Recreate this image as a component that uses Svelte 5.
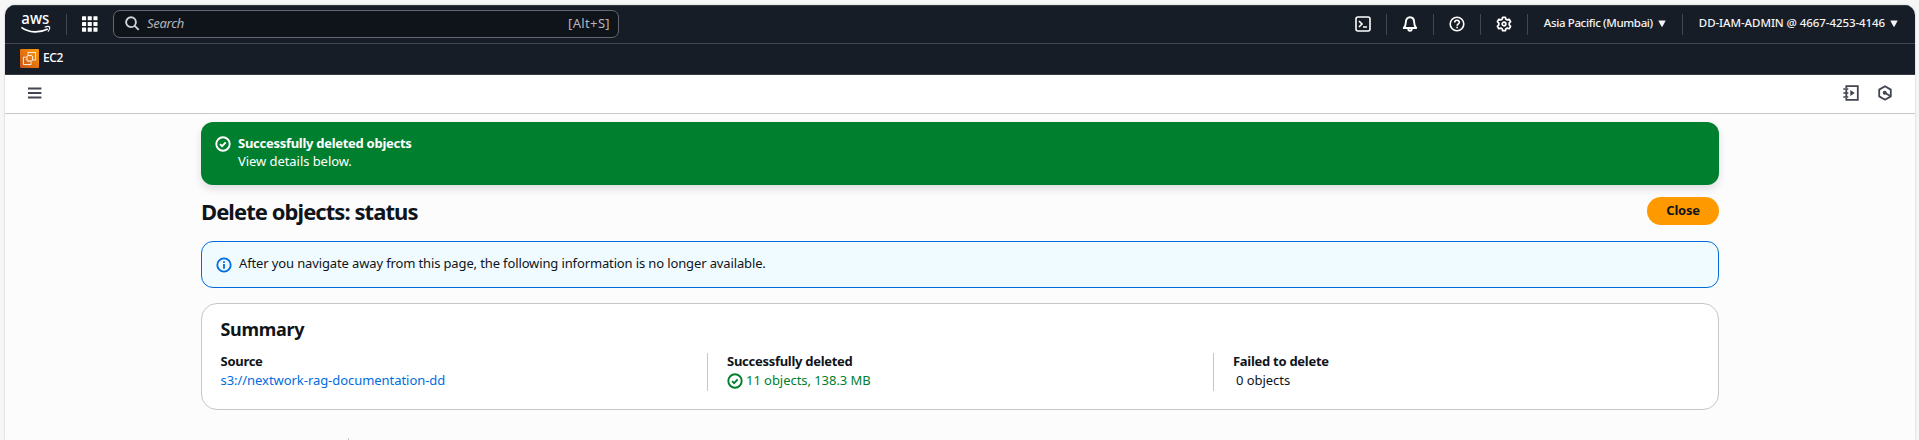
<script>
  const details = [
    { label: 'Source', value: 's3://nextwork-rag-documentation-dd', kind: 'link' },
    { label: 'Successfully deleted', value: '11 objects, 138.3 MB', kind: 'success' },
    { label: 'Failed to delete', value: '0 objects', kind: 'plain' }
  ];
  const cells = [0, 1, 2];
</script>

{#snippet check()}
  <svg class="status" viewBox="0 0 16 16" width="16" height="16" fill="none" stroke="currentColor" stroke-width="1.9">
    <circle cx="8" cy="8" r="6.7" />
    <path d="m5 8.1 2.1 2 3.6-3.7" />
  </svg>
{/snippet}

{#snippet caret()}
  <svg class="caret" viewBox="0 0 8 7" width="8" height="7"><path d="M1 .5h6a.5.5 0 0 1 .4.8L4.5 6.4a.6.6 0 0 1-1 0L.6 1.3A.5.5 0 0 1 1 .5z" fill="currentColor" /></svg>
{/snippet}

<div class="window">
  <header class="nav">
    <svg class="aws" width="30" height="22" viewBox="0 0 30 22">
      <text x="0.3" y="10.800" textLength="28" lengthAdjust="spacingAndGlyphs">aws</text>
      <path d="M.4 14.400c7.800 5.600 18 5.800 26.400 1.600" fill="none" stroke="#fff" stroke-width="1.7" />
      <path d="M23.700 14.200c1.900-.8 4.200-.8 4.900-.2.4 1.200-.3 3.300-1.700 4.700" fill="none" stroke="#fff" stroke-width="1.2" />
    </svg>
    <i class="rule first"></i>
    <svg class="apps" width="16" height="16" viewBox="0 0 16 16">
      {#each cells as r}{#each cells as c}<rect x={c * 5.7} y={0.2 + r * 5.7} width="4.1" height="4.1" rx=".5" fill="#fff" />{/each}{/each}
    </svg>
    <div class="search">
      <svg width="15" height="15" viewBox="0 0 15 15" fill="none" stroke="#d0d3d8" stroke-width="1.9"><circle cx="6" cy="6.200" r="4.900" /><path d="m9.500 9.700 4.200 4.200" /></svg>
      <em>Search</em>
      <span>[Alt+S]</span>
    </div>
    <div class="tools">
      <svg width="16" height="16" viewBox="0 0 16 16" fill="none" stroke="#fff" stroke-width="1.6"><rect x="1" y="1" width="14" height="14" rx="2" /><path d="m4 5 3 3-3 3M8 11h4" /></svg>
      <i class="rule"></i>
      <svg width="16" height="16" viewBox="0 0 16 16" fill="none" stroke="#fff" stroke-width="1.9" stroke-linejoin="round"><path d="M1.800 12h12.400c-1.400-1.400-2-2.800-2-5.400 0-3.400-1.700-5.400-4.200-5.400S3.800 3.200 3.800 6.600c0 2.600-.6 4-2 5.400z" /><path d="M6.200 12.500c0 3 3.600 3 3.600 0" /></svg>
      <i class="rule"></i>
      <svg width="16" height="16" viewBox="0 0 16 16" fill="none" stroke="#fff" stroke-width="1.6"><circle cx="8" cy="8" r="6.800" /><path d="M5.700 6.500c0-3 4.700-2.900 4.700-.2 0 1.600-2.300 1.500-2.300 3.500M8.100 10.700v1.600" /></svg>
      <i class="rule"></i>
      <svg width="16" height="16" viewBox="0 0 16 16" fill="none" stroke="#fff" stroke-width="1.7" stroke-linejoin="round"><path d="M6.600 1.300h2.800l.5 1.900 1.300.7 2-.6 1.400 2.400-1.400 1.500v1.600l1.400 1.500-1.400 2.400-2-.6-1.300.7-.5 1.900H6.600l-.5-1.900-1.300-.7-2 .6-1.400-2.400 1.400-1.500V7.200L1.400 5.700l1.400-2.400 2 .6 1.300-.7z" /><circle cx="8" cy="8" r="1.800" /></svg>
      <i class="rule"></i>
      <span class="region">Asia Pacific (Mumbai)</span>{@render caret()}
      <i class="rule account-rule"></i>
      <span class="account">DD-IAM-ADMIN @ 4667-4253-4146</span>{@render caret()}
    </div>
  </header>

  <div class="favorites">
    <svg width="19" height="19" viewBox="0 0 19 19">
      <defs><linearGradient id="ec2" x1="0" y1="1" x2="1" y2="0"><stop stop-color="#c8511b" /><stop offset="1" stop-color="#f90" /></linearGradient></defs>
      <rect width="19" height="19" rx="1" fill="url(#ec2)" />
      <g fill="none" stroke="#fff" stroke-width=".9"><path d="M8 5.500V3.400h7.600V11h-2.100M5.700 8.200H3.400v7.400H11v-2.100" /><rect x="7" y="6.600" width="5.400" height="5.400" rx=".8" /><path d="M8.400 5.300v1.300M11 5.300v1.300M8.400 12v1.300M11 12v1.300M5.700 8h1.300M5.700 10.600H7M12.400 8h1.300M12.400 10.600h1.300" stroke-width=".5" /></g>
    </svg>
    <span>EC2</span>
  </div>

  <div class="toolbar">
    <svg width="14" height="12" viewBox="0 0 14 12"><path d="M0 1.500h13.400M0 6h13.400M0 10.500h13.400" stroke="#424650" stroke-width="1.900" /></svg>
    <div class="panel-icons">
      <svg width="16" height="16" viewBox="0 0 16 16" fill="none" stroke="#424650" stroke-width="1.800"><path d="M3.300 3V1.200h11.500v13.600H3.300V13M3.300 4v8" /><path d="M.3 4h5M.3 8h5M.3 12h5" stroke-width="1.600" /><path d="M7.300 5.100v5.800L11.800 8z" fill="#424650" stroke="none" /></svg>
      <svg width="16" height="16" viewBox="0 0 16 16" fill="none" stroke="#424650" stroke-width="1.800" stroke-linejoin="round"><path d="m8 1.300 5.800 3.300v6.800L8 14.700l-5.800-3.300V4.600z" /><circle cx="7.700" cy="7.700" r="2" fill="#424650" stroke="none" /><path d="m7.700 7.800 5.200 2.900" /></svg>
    </div>
  </div>

  <main>
    <section class="flash">
      {@render check()}
      <div><strong>Successfully deleted objects</strong><p>View details below.</p></div>
    </section>

    <div class="heading"><h1>Delete objects: status</h1><button>Close</button></div>

    <section class="alert">
      <svg class="status" viewBox="0 0 16 16" width="16" height="16" fill="none" stroke="currentColor" stroke-width="1.800"><circle cx="8" cy="8" r="6.700" /><path d="M8 7v4.700M8 4.300v1.600" /></svg>
      <p>After you navigate away from this page, the following information is no longer available.</p>
    </section>

    <section class="summary">
      <h2>Summary</h2>
      <div class="columns">
        {#each details as d}
          <div class="column">
            <strong>{d.label}</strong>
            <div class="value {d.kind}">{#if d.kind === 'success'}{@render check()}{/if}<span>{d.value}</span></div>
          </div>
        {/each}
      </div>
    </section>
    <div class="tabs"></div>
  </main>
</div>

<style>
  :global(body) { margin: 0; background: #f6f6f6; overflow: hidden; }
  svg { display: block; flex: none; }
  h1, h2, p { margin: 0; }
  .window {
    box-sizing: border-box; height: 435px; margin: 5px 4px 0 5px; overflow: hidden;
    border-radius: 10px 10px 0 0; background: #fcfcfd; color: #0f141a;
    font: 13px/18px "Noto Sans", "Open Sans", sans-serif; box-shadow: 0 0 2px #bbb;
  }
  .nav { display: flex; align-items: center; box-sizing: border-box; height: 39px; padding: 0 18px 1px 16px; background: #161d26; border-top: 1px solid #333a44; border-bottom: 1px solid #424650; color: #f3f3f7; }
  .aws { overflow: visible; }
  .aws text { font: 500 16px/16px "Noto Sans", sans-serif; fill: #fff; }
  .rule { width: 1px; height: 21px; background: #424650; flex: none; }
  .first { margin: 0 15px; }
  .search { display: flex; align-items: center; box-sizing: border-box; width: 506px; height: 28px; margin-left: 15px; padding: 0 8px 2px 11px; border: 1px solid #656871; border-radius: 7px; background: #0f141a; color: #b4b4bb; }
  .search em { margin-left: 7px; letter-spacing: -.3px; }
  .search span { margin-left: auto; letter-spacing: .35px; }
  .tools { display: flex; align-items: center; margin-left: auto; margin-right: -1px; font-size: 11.5px; font-weight: 500; }
  .tools .rule { margin: 0 15px; }
  .tools .caret { margin: 0 0 1px 5px; }
  .tools span { margin-bottom: 2px; }
  .region { margin-left: 1px; letter-spacing: -.36px; }
  .account { letter-spacing: -.08px; }
  .tools .account-rule { margin: 0 16px; }
  .favorites { display: flex; align-items: center; box-sizing: border-box; height: 31px; padding: 0 0 2px 15px; gap: 4px; background: #161d26; border-bottom: 1px solid #333a44; color: #fff; font-size: 12px; font-weight: 500; letter-spacing: -.4px; }
  .toolbar { display: flex; align-items: center; justify-content: space-between; box-sizing: border-box; height: 39px; padding: 0 22px 2px 23px; background: #fff; border-bottom: 1px solid #c6c6cd; }
  .panel-icons { display: flex; gap: 18px; }
  main { width: 1518px; margin-left: 196px; padding-top: 8px; }
  .status { margin-top: 1px; }
  .flash { display: flex; box-sizing: border-box; height: 63px; padding: 12px 14px; gap: 7px; border-radius: 12px; background: #00802f; color: #fff; box-shadow: 0 4px 8px rgba(0, 7, 22, .12); }
  .flash .status { margin-top: 2px; }
  .flash strong { display: block; }
  .flash p { letter-spacing: -.06px; }
  strong { font-weight: 700; letter-spacing: -.28px; }
  .heading { display: flex; align-items: center; justify-content: space-between; height: 28px; margin: 12px 0 16px; }
  h1 { font-size: 22px; font-weight: 700; line-height: 28px; letter-spacing: -.94px; }
  button { width: 72px; height: 28px; padding: 0 0 2px; border: 0; border-radius: 14px; background: #f90; color: #0f141a; font: 700 13px/18px "Noto Sans", sans-serif; letter-spacing: -.25px; }
  .alert { display: flex; box-sizing: border-box; height: 47px; padding: 12px 14px; gap: 7px; border: 1px solid #006ce0; border-radius: 12px; background: #f0fbff; }
  .alert svg { color: #006ce0; margin-top: 3px; }
  .alert p { letter-spacing: -.13px; }
  .summary { box-sizing: border-box; height: 107px; margin-top: 15px; padding: 14px 18.5px 0; border: 1px solid #c6c6cd; border-radius: 16px; background: #fff; }
  h2 { font-size: 18px; font-weight: 700; line-height: 22px; letter-spacing: -.3px; }
  .columns { display: grid; grid-template-columns: 486.5px 506px 1fr; margin-top: 13px; }
  .column { box-sizing: border-box; height: 38px; }
  .column + .column { padding-left: 19px; border-left: 1px solid #c6c6cd; }
  .column strong { display: block; margin-top: -1px; }
  .value { display: flex; gap: 3px; height: 20px; line-height: 20px; letter-spacing: -.05px; }
  .value .status { margin-top: 3px; }
  .link { color: #006ce0; }
  .success { color: #00802f; }
  .plain { padding-left: 3px; }
  .tabs { width: 147px; height: 20px; margin-top: 28px; border-right: 1px solid #c6c6cd; }
</style>
